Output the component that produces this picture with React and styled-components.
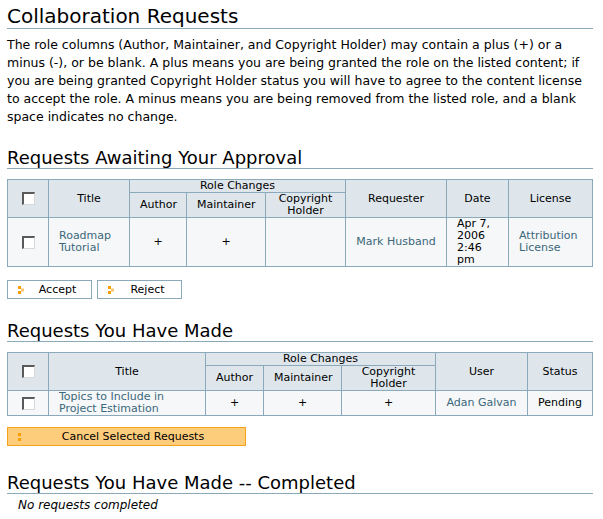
import styled, { createGlobalStyle } from 'styled-components'

const GlobalStyle = createGlobalStyle`
  html, body {
    margin: 0;
    padding: 0;
    background: #ffffff;
  }
  body {
    font-family: "DejaVu Sans", Verdana, sans-serif;
    color: #000;
  }
`

const Page = styled.div`
  width: 586px;
  padding: 0 10px 0 7px;
`

const Title = styled.h1`
  margin: 0;
  padding-top: 4px;
  font-family: "DejaVu Sans", Tahoma, sans-serif;
  font-weight: normal;
  font-size: 20px;
  line-height: 24px;
  border-bottom: 1px solid #8aaabb;
`

const SectionTitle = styled.h2`
  margin: ${p => p.$top || 21}px 0 0;
  font-family: "DejaVu Sans", Tahoma, sans-serif;
  font-weight: normal;
  font-size: 18px;
  line-height: 21px;
  border-bottom: 1px solid #8aaabb;
`

const Intro = styled.p`
  margin: 7px 0 0;
  font-family: "DejaVu Sans", Tahoma, sans-serif;
  font-size: 12.5px;
  line-height: 18px;
`

const Table = styled.table`
  margin-top: 10px;
  width: 586px;
  border-collapse: collapse;
  table-layout: fixed;
  font-family: "DejaVu Sans", Verdana, sans-serif;
  font-size: 11px;
  line-height: 12px;
  th, td {
    border: 1px solid #8aaabb;
    padding: 0 10px;
    vertical-align: middle;
  }
  th {
    background: #dee6ec;
    font-weight: normal;
    text-align: center;
  }
  td {
    background: #f5f7f9;
  }
`

const Cell = styled.td`
  text-align: ${p => p.$align || 'left'};
`

const Link = styled.a`
  color: #3b6879;
  text-decoration: none;
`

const Check = styled.input.attrs({ type: 'checkbox' })`
  appearance: none;
  display: block;
  margin: 0 auto;
  width: 13px;
  height: 13px;
  box-sizing: border-box;
  border-style: solid;
  border-width: 2px 1px 1px 2px;
  border-color: #5a5a5a #d8d8d8 #d8d8d8 #5a5a5a;
  background: #fff;
`

const ButtonRow = styled.div`
  display: flex;
  gap: 5px;
  margin-top: ${p => p.$top || 13}px;
`

const Button = styled.button`
  display: flex;
  align-items: center;
  width: ${p => p.$width}px;
  height: 19px;
  box-sizing: border-box;
  padding: 0 0 0 10px;
  margin: 0;
  border: 1px solid ${p => (p.$primary ? '#f5a31a' : '#8aaabb')};
  background: ${p => (p.$primary ? '#fecd7c' : '#ffffff')};
  font-family: "DejaVu Sans", Verdana, sans-serif;
  font-size: 11px;
  color: #000;
  span {
    flex: 1;
    text-align: center;
  }
`

const Empty = styled.p`
  margin: 4px 0 0 11px;
  font-family: "DejaVu Sans", Tahoma, sans-serif;
  font-style: italic;
  font-size: 12px;
  line-height: 14px;
`

const Arrow = () => (
  <svg width="6" height="8" viewBox="0 0 6 8">
    <rect x="0" y="0" width="3" height="3" fill="#f7a000" />
    <rect x="3" y="2.5" width="3" height="3" fill="#fdc46a" />
    <rect x="0" y="5" width="3" height="3" fill="#f7a000" />
  </svg>
)

const Dots = () => (
  <svg width="3" height="8" viewBox="0 0 3 8">
    <rect x="0" y="0" width="3" height="3" fill="#f7a000" />
    <rect x="0" y="5" width="3" height="3" fill="#f7a000" />
  </svg>
)

function App() {
  return (
    <Page>
      <GlobalStyle />
      <Title>Collaboration Requests</Title>
      <Intro>
        The role columns (Author, Maintainer, and Copyright Holder) may contain a plus (+) or a
        minus (-), or be blank. A plus means you are being granted the role on the listed content; if
        you are being granted Copyright Holder status you will have to agree to the content license
        to accept the role. A minus means you are being removed from the listed role, and a blank
        space indicates no change.
      </Intro>

      <SectionTitle>Requests Awaiting Your Approval</SectionTitle>
      <Table>
        <colgroup>
          <col style={{ width: 41 }} />
          <col style={{ width: 81 }} />
          <col style={{ width: 57 }} />
          <col style={{ width: 79 }} />
          <col style={{ width: 80 }} />
          <col style={{ width: 101 }} />
          <col style={{ width: 62 }} />
          <col style={{ width: 84 }} />
        </colgroup>
        <thead>
          <tr>
            <th rowSpan={2}><Check /></th>
            <th rowSpan={2}>Title</th>
            <th colSpan={3}>Role Changes</th>
            <th rowSpan={2}>Requester</th>
            <th rowSpan={2}>Date</th>
            <th rowSpan={2}>License</th>
          </tr>
          <tr>
            <th>Author</th>
            <th>Maintainer</th>
            <th>Copyright Holder</th>
          </tr>
        </thead>
        <tbody>
          <tr>
            <Cell $align="center"><Check /></Cell>
            <Cell><Link href="#">Roadmap Tutorial</Link></Cell>
            <Cell $align="center">+</Cell>
            <Cell $align="center">+</Cell>
            <Cell $align="center"></Cell>
            <Cell $align="center"><Link href="#">Mark Husband</Link></Cell>
            <Cell>Apr 7, 2006 2:46 pm</Cell>
            <Cell><Link href="#">Attribution License</Link></Cell>
          </tr>
        </tbody>
      </Table>
      <ButtonRow>
        <Button $width={85}><Arrow /><span>Accept</span></Button>
        <Button $width={85}><Arrow /><span>Reject</span></Button>
      </ButtonRow>

      <SectionTitle>Requests You Have Made</SectionTitle>
      <Table>
        <colgroup>
          <col style={{ width: 41 }} />
          <col style={{ width: 157 }} />
          <col style={{ width: 58 }} />
          <col style={{ width: 78 }} />
          <col style={{ width: 94 }} />
          <col style={{ width: 92 }} />
          <col style={{ width: 65 }} />
        </colgroup>
        <thead>
          <tr>
            <th rowSpan={2}><Check /></th>
            <th rowSpan={2}>Title</th>
            <th colSpan={3}>Role Changes</th>
            <th rowSpan={2}>User</th>
            <th rowSpan={2}>Status</th>
          </tr>
          <tr>
            <th>Author</th>
            <th>Maintainer</th>
            <th>Copyright Holder</th>
          </tr>
        </thead>
        <tbody>
          <tr>
            <Cell $align="center"><Check /></Cell>
            <Cell><Link href="#">Topics to Include in Project Estimation</Link></Cell>
            <Cell $align="center">+</Cell>
            <Cell $align="center">+</Cell>
            <Cell $align="center">+</Cell>
            <Cell $align="center"><Link href="#">Adan Galvan</Link></Cell>
            <Cell $align="center">Pending</Cell>
          </tr>
        </tbody>
      </Table>
      <ButtonRow $top={11}>
        <Button $primary $width={239}><Dots /><span>Cancel Selected Requests</span></Button>
      </ButtonRow>

      <SectionTitle $top={26}>Requests You Have Made -- Completed</SectionTitle>
      <Empty>No requests completed</Empty>
    </Page>
  )
}

export default App
